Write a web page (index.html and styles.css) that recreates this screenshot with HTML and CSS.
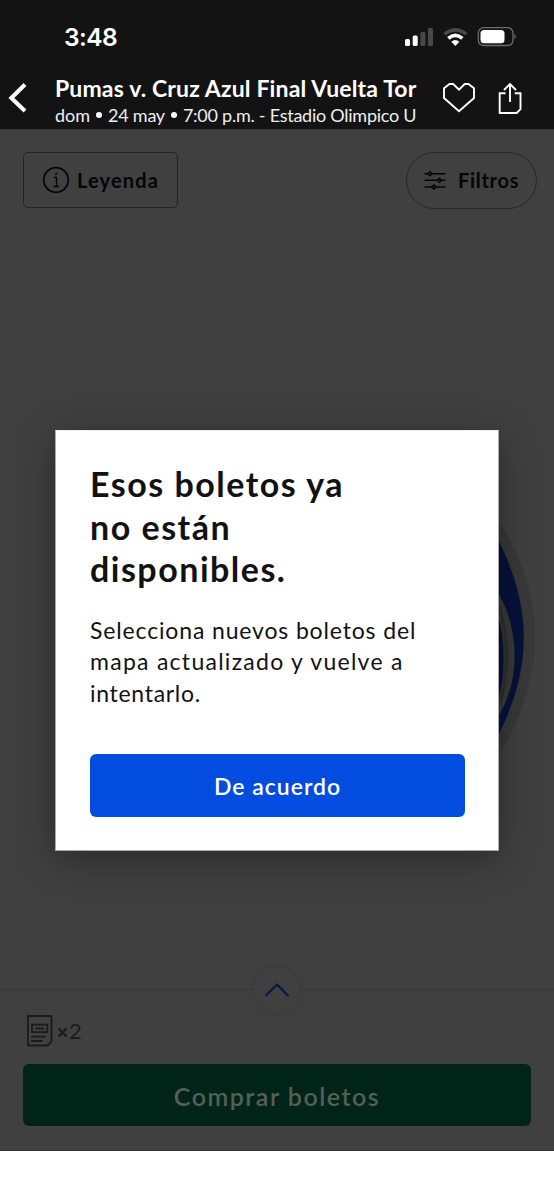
FILE: index.html
```html
<!DOCTYPE html>
<html lang="es">
<head>
<meta charset="utf-8">
<title>Boletos</title>
<link rel="stylesheet" href="styles.css">
</head>
<body>
<div class="screen">
  <header class="top">
    <div class="status">
      <span class="clock">3:48</span>
      <svg class="status-icons" width="114" height="24" viewBox="403 25 114 24">
        <rect x="405" y="39" width="5" height="7" rx="1.5" fill="#fff"/>
        <rect x="412.7" y="35.5" width="5" height="10.5" rx="1.5" fill="#fff"/>
        <rect x="420.4" y="32" width="5" height="14" rx="1.5" fill="#48484a"/>
        <rect x="428" y="28" width="5" height="18" rx="1.5" fill="#48484a"/>
        <path d="M444.5 34.2Q455.3 25.7 466.3 34.2" fill="none" stroke="#48484a" stroke-width="3.6"/>
        <path d="M448.3 38.3Q455.3 32.3 462.3 38.3" fill="none" stroke="#fff" stroke-width="3.6"/>
        <path d="M451.3 41.7Q455.3 38.4 459.3 41.7L455.3 45.9Z" fill="#fff"/>
        <rect x="478.3" y="27.7" width="34.7" height="17.8" rx="5.3" fill="none" stroke="#6c6c6c" stroke-width="1.3"/>
        <rect x="480.5" y="30" width="24" height="13.2" rx="3.5" fill="#fff"/>
        <path d="M514.5 33.8Q517 36.6 514.5 39.3Z" fill="#777"/>
      </svg>
    </div>
    <div class="nav">
      <svg class="back" width="20" height="32" viewBox="8 82 20 32"><path d="M25 84.5L11.3 98L25 111" fill="none" stroke="#fff" stroke-width="4"/></svg>
      <div class="event">
        <div class="event-name">Pumas v. Cruz Azul Final Vuelta Tor</div>
        <div class="event-info"><span class="day">dom</span><i class="dot"></i><span class="date">24 may</span><i class="dot"></i><span class="place">7:00 p.m. - Estadio Olimpico U</span></div>
      </div>
      <svg class="actions" width="82" height="36" viewBox="441 80 82 36" fill="none" stroke="#fff" stroke-width="1.9">
        <path d="M444 88.3L449.5 84H453.2L459 89.7L464.7 84H468.4L474 88.3V98L459 111.2L444 98Z"/>
        <path d="M505.5 93.3H499.7V113H516.7L520.5 109.2V93.3H514.7M510 102V84.8M504 90L510 84L516 90"/>
      </svg>
    </div>
  </header>
  <main class="stage">
    <svg class="map" width="46" height="250" viewBox="497 514 46 250">
      <path d="M497 517C549 600 547 675 497 759Z" fill="#393939"/>
      <path d="M497 537C532.5 608 533 667 497 738Z" fill="#06123a"/>
      <path d="M497 591C521 630 520 684 497 718Z" fill="#393936"/>
      <path d="M497 614C505.8 635 505.8 681 497 702Z" fill="#06123a"/>
      <path d="M499 607C509 635 508.5 682 499 703" fill="none" stroke="#2b2b2b" stroke-width="3.2" stroke-dasharray="1.5 .7"/>
    </svg>
    <div class="tools">
      <div class="legend">
        <svg width="28" height="28" viewBox="42 166 28 28" fill="none" stroke="#050505" stroke-width="1.7"><circle cx="56" cy="180" r="12.3"/><path d="M54 177.5H56.5V186.5M53.5 186.5H59" stroke-width="1.3"/><circle cx="56.2" cy="173.7" r=".7" fill="#050505" stroke-width="1"/></svg>
        <span class="legend-text">Leyenda</span>
      </div>
      <div class="filters">
        <svg width="22" height="20" viewBox="424 170 22 20" fill="none" stroke="#050505" stroke-width="1.6"><path d="M424.5 173.7H428M432 173.7H445.5M424.5 180.3H437.5M441.5 180.3H445.5M424.5 187H432M436 187H445.5"/><path d="M430 171.8l2 1.9-2 2-2-2ZM439.5 178.4l2 1.9-2 2-2-2ZM434 185l2 2-2 2-2-2Z"/></svg>
        <span class="filters-text">Filtros</span>
      </div>
    </div>
    <section class="dialog">
      <h1><span class="h-a">Esos boletos ya</span><br><span class="h-b">no están</span><br><span class="h-c">disponibles.</span></h1>
      <p><span class="p-a">Selecciona nuevos boletos del</span><br><span class="p-b">mapa actualizado y vuelve a</span><br><span class="p-c">intentarlo.</span></p>
      <button class="accept"><span>De acuerdo</span></button>
    </section>
    <footer class="purchase">
      <div class="expand"><svg width="26" height="16" viewBox="264 982 26 16"><path d="M265.5 996L277 984.5L288.5 996" fill="none" stroke="#07164b" stroke-width="2.2"/></svg></div>
      <div class="quantity">
        <svg width="27" height="33" viewBox="26 1013 27 33" fill="none" stroke="#1b1b1b" stroke-width="1.8"><path d="M28 1015H51.5V1040.5L47.5 1044.5H28Z"/><path d="M32 1023.7H47.3V1031.2H32ZM35.5 1027.5H44M31 1035.6H46M31 1040H42.5"/></svg>
        <svg class="times" width="11" height="11" viewBox="0 0 11 11"><path d="M1.5 1.5L9.5 9.5M9.5 1.5L1.5 9.5" stroke="#1b1b1b" stroke-width="2.4"/></svg>
        <span>2</span>
      </div>
      <button class="buy"><span>Comprar boletos</span></button>
    </footer>
  </main>
</div>
</body>
</html>
```
FILE: styles.css
```css
* { box-sizing: border-box; }
body { margin: 0; background: #fff; font-family: Lato, sans-serif; }
svg { display: block; flex: none; }
.screen { width: 554px; height: 1199px; overflow: hidden; display: flex; flex-direction: column; white-space: nowrap; }
.top { height: 129px; background: #131313; color: #fff; }
.status { height: 74px; padding: 0 37px 0 64px; display: flex; justify-content: space-between; align-items: center; }
.clock { font: 600 24.5px/30px Inter, sans-serif; letter-spacing: -.6px; }
.nav { height: 55px; padding: 0 31px 0 8px; display: flex; align-items: flex-start; }
.back { margin-top: 8px; }
.event { width: 362px; margin-left: 27px; }
.event-name { font-weight: 700; font-size: 23px; line-height: 29px; letter-spacing: .15px; }
.event-info { display: flex; align-items: center; font-size: 18px; line-height: 24px; color: #eee; }
.date, .place { letter-spacing: -.25px; }
.dot { flex: none; width: 6px; height: 6px; margin: 0 6px; border-radius: 50%; background: #fff; }
.actions { margin: 6px 0 0 24px; }
.stage { height: 1022px; position: relative; background: #404040; border-top: 1px solid #393939; border-bottom: 1px solid #303030; display: flex; flex-direction: column; justify-content: space-between; }
.map { position: absolute; left: 497px; top: 384px; }
.tools { padding: 22px 17px 0 23px; display: flex; justify-content: space-between; align-items: flex-start; color: #050505; font-weight: 700; font-size: 20px; }
.legend { width: 155px; height: 56px; border: 1.5px solid #242424; border-radius: 5px; display: flex; align-items: center; padding-left: 18px; gap: 7px; }
.filters { width: 131px; height: 57px; border: 1.5px solid #282828; border-radius: 29px; display: flex; align-items: center; padding: 0 0 1px 17px; gap: 12px; }
.legend-text { letter-spacing: 1.15px; }
.filters-text { letter-spacing: .7px; }
.dialog { position: absolute; z-index: 2; left: 55px; top: 300px; width: 444px; height: 421px; padding: 32px 34px 33px; background: #fff; border: 1px solid #aaa; border-top-color: #eee; box-shadow: 0 8px 36px rgba(0,0,0,.36); color: #121212; display: flex; flex-direction: column; }
h1 { margin: 0; font-size: 34px; line-height: 42.7px; font-weight: 700; letter-spacing: 1.5px; }
p { margin: 24px 0 0; font-size: 23px; line-height: 31.2px; letter-spacing: .7px; }
.p-a { letter-spacing: .85px; }
.p-b { letter-spacing: 1.27px; }
button { border: 0; border-radius: 6px; font-family: Lato, sans-serif; font-weight: 600; padding: 0; display: flex; align-items: center; justify-content: center; }
.accept { margin-top: auto; width: 375px; height: 63px; flex: none; background: #024ddf; color: #fff; font-size: 23px; letter-spacing: 1px; }
.purchase { position: relative; height: 161px; border-top: 1px solid #383838; padding: 22px 23px 0; }
.expand { position: absolute; left: 254px; top: -23px; width: 46px; height: 46px; border-radius: 50%; background: #404040; box-shadow: 0 0 4px #383838; display: flex; align-items: center; justify-content: center; }
.quantity { height: 36px; padding-left: 3px; display: flex; align-items: center; color: #1b1b1b; font-size: 22px; }
.times { margin: 4px 1px 0 4px; }
.buy { margin-top: 16px; padding-top: 2px; width: 508px; height: 62px; background: #002518; color: #565e59; font-size: 25px; letter-spacing: 1.5px; }
```
